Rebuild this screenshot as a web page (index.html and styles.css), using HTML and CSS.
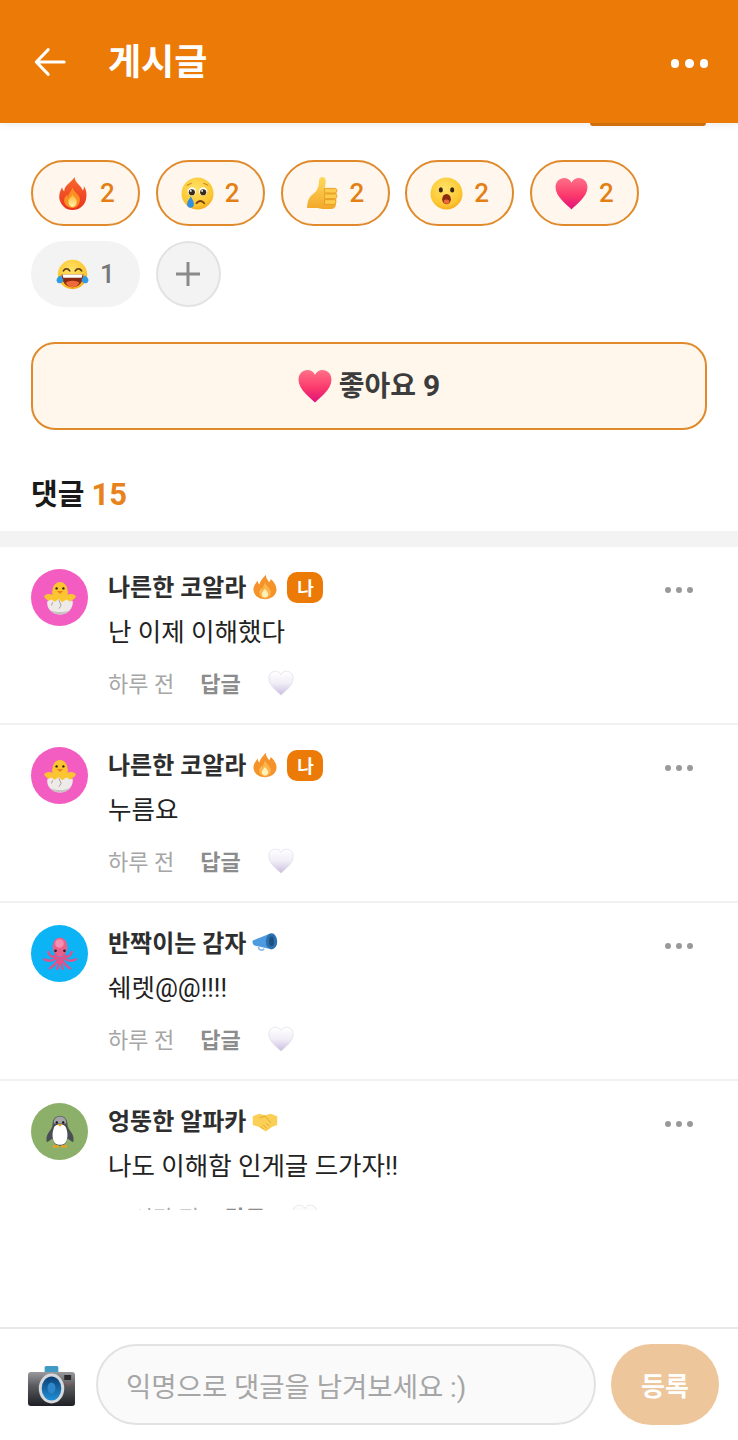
FILE: index.html
```html
<!DOCTYPE html>
<html lang="ko">
<head>
    <meta charset="UTF-8">
    <meta name="viewport" content="width=device-width, initial-scale=1.0">
    <title>게시글</title>
    <link rel="stylesheet" href="styles.css">
</head>
<body>
    <!-- shared emoji drawings -->
    <svg class="defs" xmlns="http://www.w3.org/2000/svg">
        <defs>
            <linearGradient id="g-heart" x1="0" y1="0" x2="0" y2="1"><stop offset="0" stop-color="#ff7088"/><stop offset="0.55" stop-color="#fb3a6c"/><stop offset="1" stop-color="#e0107a"/></linearGradient>
            <linearGradient id="g-white" x1="0" y1="0" x2="0" y2="1"><stop offset="0" stop-color="#ffffff"/><stop offset="0.5" stop-color="#f1eef6"/><stop offset="1" stop-color="#c9bcdf"/></linearGradient>
            <linearGradient id="g-fire" x1="0" y1="0" x2="0" y2="1"><stop offset="0" stop-color="#f96a2c"/><stop offset="1" stop-color="#e8321f"/></linearGradient>
            <linearGradient id="g-flame" x1="0" y1="0" x2="0" y2="1"><stop offset="0" stop-color="#ffb52e"/><stop offset="1" stop-color="#fff3b0"/></linearGradient>
            <radialGradient id="g-face" cx="0.45" cy="0.35" r="0.75"><stop offset="0" stop-color="#ffe268"/><stop offset="0.7" stop-color="#fcc62f"/><stop offset="1" stop-color="#ee9a12"/></radialGradient>
            <linearGradient id="g-thumb" x1="0" y1="0" x2="0" y2="1"><stop offset="0" stop-color="#ffd95c"/><stop offset="1" stop-color="#f2a72a"/></linearGradient>
            <linearGradient id="g-lens" x1="0" y1="0" x2="0" y2="1"><stop offset="0" stop-color="#0b3f73"/><stop offset="1" stop-color="#1f8fd6"/></linearGradient>
            <linearGradient id="g-cam" x1="0" y1="0" x2="0" y2="1"><stop offset="0" stop-color="#9a9a9e"/><stop offset="0.4" stop-color="#5b5c60"/><stop offset="1" stop-color="#1e1f24"/></linearGradient>
        </defs>
        <symbol id="e-fire" viewBox="0 0 32 32">
            <path fill="url(#g-fire)" d="M18 0c0 5 6 8 8 13 1-1 1-2 1-4 3 4 3 9 2 13-1 5-6 10-13 10S5 27 3.500 22C2.500 18 4 13 6 10c0 2 1 3 2 4 0-6 6-8 10-14z"/>
            <path fill="#fb8f24" d="M16 10c1 4 5 6 7 10 1 5-2 10-7 10s-9-4-8-9c1-2 2-3 3-4 0 1 0 2 1 2 0-3 3-5 4-9z"/>
            <path fill="url(#g-flame)" d="M16 17c1 2 4 4 4 7 0 3-2 5-4 5s-4-2-4-5c0-3 3-4 4-7z"/>
        </symbol>
        <symbol id="e-fire-small" viewBox="0 0 32 32">
            <path fill="#f5932a" d="M17 1c0 4 2 6 4 9 1-1 2-3 2-4 5 4 8 10 7 15-1 6-7 10-14 10S3 27 2 21C1 16 4 12 7 8c0 2 1 4 2 5 1-5 5-8 8-12z"/>
            <path fill="#fbb54c" d="M16 10c1 4 6 7 7 11 1 5-3 9-7 9s-8-4-7-9c1-2 2-3 3-4 0 1 1 2 1 2 0-3 2-5 3-9z"/>
            <path fill="#fff0b8" d="M16 18c1 2 4 4 4 7 0 2-2 4-4 4s-4-2-4-4c0-3 3-5 4-7z"/>
        </symbol>
        <symbol id="e-cry" viewBox="0 0 32 32">
            <circle cx="16" cy="16" r="15.500" fill="url(#g-face)"/>
            <path d="M6 8l4-2M26 8l-4-2" stroke="#c98a24" stroke-width="1" stroke-linecap="round" fill="none"/>
            <circle cx="10.500" cy="14" r="4" fill="#fff"/><circle cx="10.500" cy="14.800" r="3" fill="#3a2a1c"/><circle cx="9.500" cy="13.500" r="0.900" fill="#fff"/>
            <circle cx="21.500" cy="14" r="4" fill="#fff"/><circle cx="21.500" cy="14.800" r="3" fill="#3a2a1c"/><circle cx="20.500" cy="13.500" r="0.900" fill="#fff"/>
            <path d="M15 25.500c2-3 5.500-3 7.500 0" stroke="#7a3c14" stroke-width="1.800" fill="none" stroke-linecap="round"/>
            <path fill="#2f8fe0" d="M9.500 19c1.500 2.500 3 5 3 7.500a3.300 3.300 0 0 1-6.600 0c0-2.500 2-5 3.600-7.500z"/>
        </symbol>
        <symbol id="e-thumb" viewBox="0 0 32 32">
            <path fill="url(#g-thumb)" d="M16 0c2.500 0 3.500 2.500 3 6l-1 5h9c2 0 3 1.500 3 3l-1 13c0 2-1.500 4-4 4H16c-2 0-3-1-5-1H1c0-4 1-9 4-12 3-2 6-5 7-9 .5-2 .5-3 .5-5 0-2 1.500-4 3.500-4z"/>
            <path fill="#ffcb4a" d="M18 11h10c1.500 0 2 1 2 2s-1 2.500-2 2.500H18zM18 16.500h10.500c1 0 1.500 1 1.500 2s-.5 2.500-2 2.500H18zM18 22h9.500c1 0 1.500 1 1.500 2s-.5 2.500-2 2.500H18z" stroke="#dd9420" stroke-width="0.700"/>
        </symbol>
        <symbol id="e-wow" viewBox="0 0 32 32">
            <circle cx="16" cy="16" r="15.500" fill="url(#g-face)"/>
            <ellipse cx="10.500" cy="12.500" rx="2" ry="2.600" fill="#3a2410"/>
            <ellipse cx="21.500" cy="12.500" rx="2" ry="2.600" fill="#3a2410"/>
            <ellipse cx="16" cy="21.500" rx="4.200" ry="5" fill="#8a2a12"/>
            <ellipse cx="16" cy="24" rx="2.800" ry="2.200" fill="#e8683c"/>
        </symbol>
        <symbol id="e-heart" viewBox="0 0 32 32">
            <path fill="url(#g-heart)" d="M16 31.500C12 27 .5 19.500.5 10 .5 4.500 4.500 1 9 1c3 0 5.500 1.500 7 4.500C17.500 2.500 20 1 23 1c4.500 0 8.500 3.500 8.500 9 0 9.500-11.500 17-15.500 21.500z"/>
        </symbol>
        <symbol id="e-white" viewBox="0 0 32 32">
            <path fill="url(#g-white)" stroke="#dedae6" stroke-width="0.800" d="M16 31C12 26.500 1 19.500 1 10 1 4.500 5 1.500 9.500 1.500c3 0 5 1.500 6.500 4 1.500-2.500 3.500-4 6.500-4C27 1.500 31 4.500 31 10c0 9.500-11 16.500-15 21z"/>
        </symbol>
        <symbol id="e-joy" viewBox="0 0 36 34">
            <circle cx="18" cy="17" r="16" fill="url(#g-face)"/>
            <path d="M8 13c2-3 5-3 7 0M21 13c2-3 5-3 7 0" stroke="#5a3514" stroke-width="1.800" fill="none" stroke-linecap="round"/>
            <path fill="#8a2a12" d="M6 17h24c0 8-5 14-12 14S6 25 6 17z"/>
            <path fill="#fff" d="M7 17h22l-1 3.500H8z"/>
            <path fill="#ef6a3a" d="M10.500 26c3-3 12-3 15 0-2 3.500-4 5-7.500 5s-5.500-1.500-7.500-5z"/>
            <path fill="#2f9be6" d="M5 18c1 2 2.500 3 3 4.500a3.800 3.800 0 0 1-7.500 1c0-2.500 2-4.500 4.500-5.500zM31 18c-1 2-2.500 3-3 4.500a3.800 3.800 0 0 0 7.500 1c0-2.500-2-4.500-4.500-5.500z"/>
        </symbol>
        <symbol id="e-chick" viewBox="0 0 32 32">
            <path fill="#fbc531" d="M1 14c3-2 5-2 8-1-.5-2-.5-3 0-5 .5-4 3.500-7 7-7s6.500 3 7 7c.5 2 .5 3 0 5 3-1 5-1 8 1-1 3-4 5-7 5l-8 3-8-3c-3 0-6-2-7-5z"/>
            <circle cx="12.800" cy="7" r="1.100" fill="#2a1c10"/><circle cx="19.200" cy="7" r="1.100" fill="#2a1c10"/>
            <path fill="#f0801a" d="M13 9.500h6l-3 2.800z"/>
            <path fill="#eeeae8" d="M4 19l4-1.500 3 2 4-2.500 3 3 4-2.500 3 1.500 3-.5c1 7-5 13-12 13S3 26 4 19z"/>
            <path d="M15 18l2 5-2 3M9 20l-1 3" stroke="#8f8986" stroke-width="0.700" fill="none"/>
            <path fill="#c8c2c2" d="M6 27c5 3 15 3 20 0-2 3-6 4.500-10 4.500S8 30 6 27z"/>
        </symbol>
        <symbol id="e-octopus" viewBox="0 0 32 32">
            <ellipse cx="16" cy="9.500" rx="7" ry="9" fill="#e9608c"/>
            <ellipse cx="15.500" cy="6" rx="4" ry="4" fill="#f590b2"/>
            <circle cx="11.800" cy="13" r="1.300" fill="#30222a"/><circle cx="20.200" cy="13" r="1.300" fill="#30222a"/>
            <path d="M12 17c-3 3-6 1-7-3M12.500 19C10 23 5 23 1 21M14.500 19.500c-1 5-4 7-8 10M17.500 19.500c1 5 4 7 8 10M19.500 19c2.500 4 7.500 4 11.500 2M20 17c3 3 6 1 7-3M15.500 20c0 4-1 7-2 10M16.500 20c0 4 1 7 2 10" stroke="#e3508a" stroke-width="2.200" fill="none" stroke-linecap="round"/>
        </symbol>
        <symbol id="e-penguin" viewBox="0 0 32 32">
            <path fill="#4a4d52" d="M16 1c5 0 7 4 7 8 0 3 2 5 4 8 2 3 2 6 1.500 8.500-2-1-3.500-2-5.500-3.500-1 5-4 7-7 7s-6-2-7-7c-2 1.500-3.500 2.500-5.500 3.500C3 23 3 20 5 17c2-3 4-5 4-8 0-4 2-8 7-8z"/>
            <path fill="#a2a4a8" d="M16 1.500c4 0 6 3 6 6.500H10c0-3.500 2-6.500 6-6.500z"/>
            <path fill="#fff" d="M16 9c3 0 5.500 1 6 4 1 3 1.500 6 .5 10-1 4-3.500 5-6.500 5s-5.500-1-6.500-5c-1-4-.5-7 .5-10 .5-3 3-4 6-4z"/>
            <circle cx="13" cy="7" r="1.100" fill="#111"/><circle cx="19" cy="7" r="1.100" fill="#111"/>
            <path fill="#eea11e" d="M13.500 8.500h5L16 11zM9.500 28.500h5.500v2H9zM17 28.500h5.500l.5 2h-6z"/>
        </symbol>
        <symbol id="e-megaphone" viewBox="0 0 32 32">
            <path fill="#4d9ae0" d="M1 13l20-8v18L3 19c-2-1-3-4-2-6z"/>
            <ellipse cx="24" cy="14" rx="7" ry="10" fill="#2a6fae"/>
            <ellipse cx="24" cy="14" rx="3" ry="6" fill="#1d4f80"/>
            <path d="M8 21c0 4 5 5 7 2" stroke="#8fb8dd" stroke-width="2" fill="none"/>
        </symbol>
        <symbol id="e-shake" viewBox="0 0 32 32">
            <path fill="#fbcf56" d="M1 10l8-3 7 2 7-2 8 3v11l-6 2-8 6-9-6-7-2z"/>
            <path d="M10 12l6-2 7 8M11 23l3 3M14 21l4 4M18 19l3 3" stroke="#e0a52e" stroke-width="1.200" fill="none" stroke-linecap="round"/>
        </symbol>
    </svg>

    <header class="topbar">
        <div class="topbar-left">
            <svg class="back-icon" viewBox="0 0 34 30"><path d="M32 15H3M15 2L2.500 15 15 28" fill="none" stroke="#fff" stroke-width="3.400" stroke-linecap="round" stroke-linejoin="round"/></svg>
            <h1>게시글</h1>
        </div>
        <div class="dots dots-light"><i></i><i></i><i></i></div>
    </header>

    <main class="scroller">
        <div class="peek"></div>

        <div class="reactions">
            <div class="pill on"><svg class="emoji"><use href="#e-fire"/></svg><span>2</span></div>
            <div class="pill on"><svg class="emoji"><use href="#e-cry"/></svg><span>2</span></div>
            <div class="pill on"><svg class="emoji"><use href="#e-thumb"/></svg><span>2</span></div>
            <div class="pill on"><svg class="emoji"><use href="#e-wow"/></svg><span>2</span></div>
            <div class="pill on"><svg class="emoji"><use href="#e-heart"/></svg><span>2</span></div>
            <div class="pill"><svg class="emoji"><use href="#e-joy"/></svg><span>1</span></div>
            <div class="pill-add"><svg viewBox="0 0 24 24"><path d="M12 0v24M0 12h24" stroke="#8a8a8a" stroke-width="3" fill="none"/></svg></div>
        </div>

        <button class="like-btn"><svg class="like-heart"><use href="#e-heart"/></svg><span>좋아요 <i>9</i></span></button>

        <h2 class="comment-title">댓글 <span>15</span></h2>
        <div class="band"></div>

        <article class="comment">
            <div class="avatar pink"><svg><use href="#e-chick"/></svg></div>
            <div class="comment-body">
                <div class="comment-head">
                    <strong>나른한 코알라</strong>
                    <svg class="title-icon"><use href="#e-fire-small"/></svg>
                    <em class="me">나</em>
                </div>
                <p>난 이제 이해했다</p>
                <div class="meta"><time>하루 전</time><b>답글</b><svg class="meta-heart"><use href="#e-white"/></svg></div>
            </div>
            <div class="dots"><i></i><i></i><i></i></div>
        </article>

        <article class="comment">
            <div class="avatar pink"><svg><use href="#e-chick"/></svg></div>
            <div class="comment-body">
                <div class="comment-head">
                    <strong>나른한 코알라</strong>
                    <svg class="title-icon"><use href="#e-fire-small"/></svg>
                    <em class="me">나</em>
                </div>
                <p>누름요</p>
                <div class="meta"><time>하루 전</time><b>답글</b><svg class="meta-heart"><use href="#e-white"/></svg></div>
            </div>
            <div class="dots"><i></i><i></i><i></i></div>
        </article>

        <article class="comment">
            <div class="avatar blue"><svg><use href="#e-octopus"/></svg></div>
            <div class="comment-body">
                <div class="comment-head">
                    <strong>반짝이는 감자</strong>
                    <svg class="title-icon"><use href="#e-megaphone"/></svg>
                </div>
                <p>쉐렛@@!!!!</p>
                <div class="meta"><time>하루 전</time><b>답글</b><svg class="meta-heart"><use href="#e-white"/></svg></div>
            </div>
            <div class="dots"><i></i><i></i><i></i></div>
        </article>

        <article class="comment">
            <div class="avatar green"><svg><use href="#e-penguin"/></svg></div>
            <div class="comment-body">
                <div class="comment-head">
                    <strong>엉뚱한 알파카</strong>
                    <svg class="title-icon"><use href="#e-shake"/></svg>
                </div>
                <p>나도 이해함 인게글 드가자!!</p>
                <div class="meta"><time>21시간 전</time><b>답글</b><svg class="meta-heart"><use href="#e-white"/></svg></div>
            </div>
            <div class="dots"><i></i><i></i><i></i></div>
        </article>
    </main>

    <footer class="composer">
        <svg class="camera" viewBox="0 0 50 40" preserveAspectRatio="none">
            <rect x="18" y="0" width="14" height="7" rx="1.500" fill="#3f9bc4"/>
            <rect x="1" y="6" width="48" height="34" rx="3" fill="url(#g-cam)"/>
            <rect x="38" y="9" width="7" height="5" fill="#2a2a2c"/>
            <circle cx="42" cy="18" r="1" fill="#d8403a"/>
            <ellipse cx="25" cy="22.500" rx="13" ry="15" fill="#d5d8dc"/>
            <ellipse cx="25" cy="22.500" rx="10" ry="12" fill="url(#g-lens)"/>
            <ellipse cx="25" cy="22" rx="4" ry="5.500" fill="#2f86c8"/>
        </svg>
        <div class="comment-input">익명으로 댓글을 남겨보세요 :)</div>
        <button class="submit">등록</button>
    </footer>
</body>
</html>
```

FILE: styles.css
```css
* {
    margin: 0;
    padding: 0;
    box-sizing: border-box;
}

body {
    width: 738px;
    height: 1440px;
    display: flex;
    flex-direction: column;
    overflow: hidden;
    background-color: white;
    font-family: Roboto, 'Noto Sans CJK KR', sans-serif;
    color: #222;
}

.defs {
    display: block;
    width: 0;
    height: 0;
}

.topbar {
    height: 123px;
    flex: none;
    display: flex;
    align-items: center;
    justify-content: space-between;
    padding: 0 30px 0 34px;
    background-color: #ec7a06;
    box-shadow: 0 2px 8px rgba(0, 0, 0, 0.08);
    position: relative;
    z-index: 1;
}

.topbar-left {
    display: flex;
    align-items: center;
    gap: 42px;
}

.back-icon {
    width: 32px;
    height: 30px;
}

.topbar h1 {
    margin-top: 3px;
    font-size: 36px;
    font-weight: 700;
    color: white;
    line-height: 1;
}

.dots {
    display: flex;
    gap: 5px;
}

.dots i {
    width: 6px;
    height: 6px;
    border-radius: 50%;
    background-color: #999;
}

.dots-light {
    gap: 6px;
    margin-top: 4px;
}

.dots-light i {
    width: 8.500px;
    height: 8.500px;
    background-color: white;
}

.scroller {
    height: 1087px;
    flex: none;
    overflow: hidden;
}

.peek {
    width: 116px;
    height: 3px;
    margin-left: 590px;
    background-color: #d9730d;
    border-radius: 0 0 12px 12px;
}

.reactions {
    display: flex;
    flex-wrap: wrap;
    gap: 15px 15.750px;
    padding: 34px 31px 0;
}

.pill {
    width: 109px;
    height: 66px;
    display: flex;
    align-items: center;
    justify-content: center;
    gap: 11px;
    border-radius: 33px;
    background-color: #f3f3f3;
    font-size: 26px;
    font-weight: 500;
    color: #777;
}

.pill.on {
    background-color: #fff7ee;
    border: 2px solid #e08a2c;
    color: #e37f14;
}

.emoji {
    width: 33px;
    height: 33px;
}

.pill-add {
    width: 65px;
    height: 66px;
    display: flex;
    align-items: center;
    justify-content: center;
    border-radius: 50%;
    border: 2px solid #e2e2e2;
    background-color: #f3f3f3;
}

.pill-add svg {
    width: 24px;
    height: 24px;
}

.like-btn {
    display: flex;
    align-items: center;
    justify-content: center;
    gap: 7px;
    width: 676px;
    height: 88px;
    margin: 35px 31px 0;
    background-color: #fff7ec;
    border: 2px solid #e08a2c;
    border-radius: 24px;
    font-family: inherit;
    font-size: 28px;
    font-weight: 700;
    color: #3c3c3c;
}

.like-btn span {
    padding-bottom: 4px;
}

.like-btn i {
    font-size: 30px;
    font-style: normal;
}

.like-heart {
    width: 34px;
    height: 34px;
}

.comment-title {
    margin: 44px 31px 0;
    font-size: 29px;
    line-height: 42px;
    font-weight: 700;
    color: #191919;
}

.comment-title span {
    font-size: 31px;
    color: #e8821a;
}

.band {
    height: 16px;
    margin-top: 15px;
    background-color: #f3f3f3;
}

.comment {
    display: flex;
    height: 178px;
    padding: 22px 31px 0;
    border-bottom: 2px solid #f1f1f1;
}

.avatar {
    width: 57px;
    height: 57px;
    flex: none;
    display: flex;
    align-items: center;
    justify-content: center;
    border-radius: 50%;
}

.avatar svg {
    width: 34px;
    height: 34px;
}

.pink { background-color: #f35cc0; }
.blue { background-color: #0db4f5; }
.green { background-color: #8cb069; }

.comment-body {
    flex: 1;
    margin-left: 20px;
}

.comment-head {
    display: flex;
    align-items: center;
    height: 36px;
}

.comment-head strong {
    padding-bottom: 4px;
    font-size: 24px;
    font-weight: 700;
    color: #2e2e2e;
}

.title-icon {
    width: 26px;
    height: 26px;
    margin-left: 6px;
}

.me {
    width: 36px;
    height: 31px;
    margin-left: 9px;
    display: flex;
    align-items: center;
    justify-content: center;
    border-radius: 10px;
    background-color: #ec7a06;
    color: white;
    font-size: 18px;
    font-style: normal;
    font-weight: 700;
}

.comment-body p {
    margin-top: 8px;
    font-size: 25.500px;
    line-height: 38px;
    color: #222;
}

.meta {
    display: flex;
    align-items: center;
    margin-top: 13px;
    height: 36px;
    font-size: 22px;
}

.meta time {
    color: #a6a6a6;
}

.meta b {
    margin-left: 26px;
    color: #8c8c8c;
    font-weight: 700;
}

.meta-heart {
    width: 26px;
    height: 26px;
    margin: 1px 0 0 27px;
}

.comment > .dots {
    margin: 18px 14px 0 0;
}

.composer {
    height: 113px;
    flex: none;
    margin-top: auto;
    display: flex;
    align-items: flex-start;
    padding: 15px 19px 0 27px;
    border-top: 2px solid #e8e8e8;
}

.camera {
    width: 49px;
    height: 40px;
    flex: none;
    margin-top: 22px;
}

.comment-input {
    width: 500px;
    height: 81px;
    margin-left: 20px;
    padding-left: 28px;
    display: flex;
    align-items: center;
    border: 2px solid #e2e2e2;
    border-radius: 41px;
    background-color: #fafafa;
    font-size: 27.500px;
    color: #a6a6a6;
}

.submit {
    width: 108px;
    height: 81px;
    margin-left: 15px;
    border: none;
    border-radius: 41px;
    background-color: #eec69b;
    font-family: inherit;
    font-size: 26px;
    font-weight: 700;
    color: white;
}
```
